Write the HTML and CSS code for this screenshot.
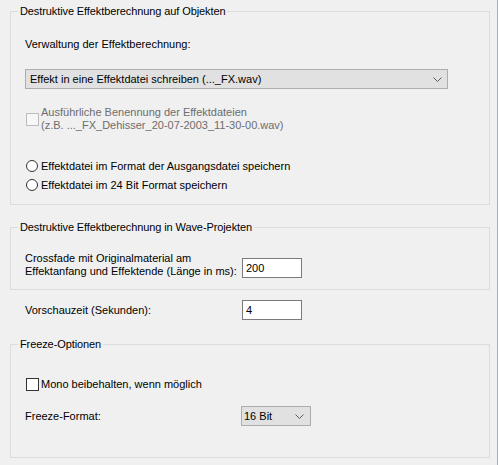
FILE: index.html
```html
<!DOCTYPE html>
<html lang="de">
<head>
<meta charset="utf-8">
<title>Effektberechnung</title>
<link rel="stylesheet" href="styles.css">
</head>
<body>
<div class="panel">
  <fieldset class="group g1">
    <legend>Destruktive Effektberechnung auf Objekten</legend>
    <div class="label l-verw">Verwaltung der Effektberechnung:</div>
    <div class="select wide">
      <span class="select-text">Effekt in eine Effektdatei schreiben (..._FX.wav)</span>
      <svg class="chev" width="9" height="5" viewBox="0 0 9 5"><path d="M0.5 0.5 L4.5 4.5 L8.5 0.5" fill="none" stroke="#5a5a5a" stroke-width="1"/></svg>
    </div>
    <div class="check disabled c-ausf">
      <span class="box"></span>
      <span class="check-text">Ausführliche Benennung der Effektdateien<br>(z.B. ..._FX_Dehisser_20-07-2003_11-30-00.wav)</span>
    </div>
    <div class="radios">
      <div class="radio"><span class="circle"></span><span>Effektdatei im Format der Ausgangsdatei speichern</span></div>
      <div class="radio"><span class="circle"></span><span>Effektdatei im 24 Bit Format speichern</span></div>
    </div>
  </fieldset>

  <fieldset class="group g2">
    <legend>Destruktive Effektberechnung in Wave-Projekten</legend>
    <div class="row r-cross">
      <div class="label lbl-col">Crossfade mit Originalmaterial am<br>Effektanfang und Effektende (Länge in ms):</div>
      <div class="input">200</div>
    </div>
  </fieldset>

  <div class="row r-vor">
    <div class="label lbl-col">Vorschauzeit (Sekunden):</div>
    <div class="input">4</div>
  </div>

  <fieldset class="group g3">
    <legend>Freeze-Optionen</legend>
    <div class="check c-mono">
      <span class="box"></span>
      <span class="check-text">Mono beibehalten, wenn möglich</span>
    </div>
    <div class="row r-freeze">
      <div class="label lbl-col2">Freeze-Format:</div>
      <div class="select small">
        <span class="select-text">16 Bit</span>
        <svg class="chev" width="9" height="5" viewBox="0 0 9 5"><path d="M0.5 0.5 L4.5 4.5 L8.5 0.5" fill="none" stroke="#5a5a5a" stroke-width="1"/></svg>
      </div>
    </div>
  </fieldset>
</div>
</body>
</html>
```

FILE: styles.css
```css
* { box-sizing: border-box; }
html, body {
  margin: 0;
  padding: 0;
  background: #f0f0f0;
}
body {
  font-family: "Liberation Sans", Arial, sans-serif;
  font-size: 11px;
  color: #000;
}
.panel {
  width: 498px;
  height: 465px;
  border-right: 1px solid #9fb3c8;
  padding-top: 4px;
  overflow: hidden;
}
.group {
  margin: 0 0 0 10px;
  width: 480px;
  border: 1px solid #dcdcdc;
  padding: 0 0 0 14px;
}
.group legend {
  margin-left: -7px;
  padding: 0 2px;
  line-height: 14px;
  font-size: 11px;
  letter-spacing: -0.1px;
}
.label { line-height: 14px; }
.l-verw { margin-top: 19px; }

.select {
  display: flex;
  align-items: center;
  justify-content: space-between;
  height: 20px;
  background: #e1e1e1;
  border: 1px solid #adadad;
  padding: 0 5px 0 4px;
}
.select.wide { width: 423px; margin-top: 18px; }
.select.small { width: 70px; padding-left: 2px; padding-right: 6px; }
.chev { display: block; }

.check {
  display: flex;
  align-items: center;
  margin-left: 1px;
}
.check .box {
  width: 13px;
  height: 13px;
  border: 1px solid #333;
  background: #fff;
  flex: none;
  margin-right: 2px;
}
.check.disabled { color: #6d6d6d; }
.check.disabled .box { border-color: #bcbcbc; background: #f7f7f7; }
.check-text { line-height: 13px; }
.c-ausf { margin-top: 17px; }
.c-ausf .box { margin-top: 1px; }

.radios { margin-top: 24px; padding-bottom: 10px; }
.radio {
  display: flex;
  align-items: center;
  height: 19px;
  margin-left: 1px;
}
.radio .circle {
  width: 12px;
  height: 12px;
  border: 1px solid #333;
  border-radius: 50%;
  background: #fff;
  margin-right: 3px;
  flex: none;
}

.g2 { margin-top: 15px; padding-bottom: 11px; }
.row { display: flex; }
.r-cross { margin-top: 18px; align-items: flex-end; }
.lbl-col { width: 217px; line-height: 13px; }
.input {
  width: 60px;
  height: 20px;
  background: #fff;
  border: 1px solid #7a7a7a;
  padding: 0 3px;
  line-height: 18px;
}
.r-vor { margin-top: 10px; padding-left: 25px; align-items: center; }

.g3 { margin-top: 17px; padding-bottom: 31px; }
.c-mono { margin-top: 27px; }
.r-freeze { margin-top: 15px; align-items: center; }
.lbl-col2 { width: 216px; }
```
